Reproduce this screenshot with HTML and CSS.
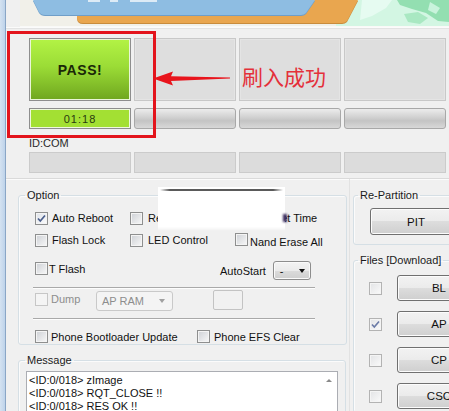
FILE: index.html
```html
<!DOCTYPE html>
<html lang="en">
<head>
<meta charset="utf-8">
<title>Odin3</title>
<link rel="stylesheet" href="styles.css">
</head>
<body>
<div class="window">
  <div class="frame"></div>
  <div class="main">
    <div class="banner">
      <svg width="443" height="27" viewBox="6 0 443 27" aria-hidden="true">
        <rect x="20" y="0" width="429" height="26" fill="#f1f0e9"/>
        <rect x="20" y="26" width="429" height="1" fill="#f9f9f7"/>
        <path d="M338 0 L449 0 L449 26 L336 26 Z" fill="#d3f6e3"/>
        <path d="M362 0 L392 0 L386 8 L372 16 L360 20 Z" fill="#e6fbf1"/>
        <path d="M397 0 L449 0 L449 22 L438 21 L426 13 L412 9 L400 5 Z" fill="#93dfb1"/>
        <path d="M404 14 L418 12 L428 18 L420 24 L408 22 Z" fill="#a9e8c2"/>
        <path d="M430 2 L440 8 L436 14 L428 10 Z" fill="#c9f3dc"/>
        <path d="M77 1 L358 1 L347 22 Q345 24 342 24 L83 24 Q77 24 77 18 Z" fill="#c98c3c"/>
        <path d="M77 0 L358 0 L347 21 Q345 23 342 23 L83 23 Q77 23 77 17 Z" fill="#e9a64f"/>
        <path d="M33 1 L315 1 L306 14 Q304 16 301 16 L45 16 Q41 16 39 13 Z" fill="#6f9ec8"/>
        <path d="M33 0 L315 0 L306 13 Q304 15 301 15 L45 15 Q41 15 39 12 Z" fill="#8ebde2"/>
        <rect x="88" y="0" width="12" height="2" fill="#ffffff" opacity="0.7"/>
        <rect x="110" y="0" width="8" height="2" fill="#ffffff" opacity="0.7"/>
        <rect x="130" y="0" width="27" height="2" fill="#ffffff" opacity="0.7"/>
      </svg>
    </div>
    <div class="banner-rule"></div>
    <div class="status">
      <div class="cells boxes">
        <div class="box pass">PASS!</div>
        <div class="box"></div>
        <div class="box"></div>
        <div class="box"></div>
      </div>
      <div class="cells bars">
        <div class="bar done">01:18</div>
        <div class="bar"></div>
        <div class="bar"></div>
        <div class="bar"></div>
      </div>
      <div class="idcom">ID:COM</div>
      <div class="cells ids">
        <div class="idbox"></div>
        <div class="idbox"></div>
        <div class="idbox"></div>
        <div class="idbox"></div>
      </div>
    </div>
    <div class="lower">
      <div class="left">
        <fieldset class="group option">
          <legend>Option</legend>
          <div class="row r1">
            <div class="chk w95"><span class="cb checked"><svg width="11" height="11" viewBox="0 0 11 11"><path d="M2 5.5 L4.3 8 L9 2.5" fill="none" stroke="#4b5f8c" stroke-width="1.7"/></svg></span><span class="t g4">Auto Reboot</span></div>
            <div class="chk w105"><span class="cb"></span><span class="t g5">Re-Partition</span></div>
            <div class="chk"><span class="cb"></span><span class="t g2">F. Reset Time</span></div>
          </div>
          <div class="row r2">
            <div class="chk w95"><span class="cb"></span><span class="t g4">Flash Lock</span></div>
            <div class="chk w105"><span class="cb"></span><span class="t g5">LED Control</span></div>
            <div class="chk nand"><span class="cb"></span><span class="t g2">Nand Erase All</span></div>
          </div>
          <div class="row r3">
            <div class="chk tflash"><span class="cb"></span><span class="t g1">T Flash</span></div>
            <div class="autostart">
              <span class="t">AutoStart</span>
              <div class="combo"><span>-</span><span class="caret"></span></div>
            </div>
          </div>
          <div class="rule"></div>
          <div class="row r4">
            <div class="chk dump disabled"><span class="cb"></span><span class="t g3">Dump</span></div>
            <div class="combo wide disabled"><span>AP RAM</span><span class="caret"></span></div>
            <div class="smallbox"></div>
          </div>
          <div class="rule rule2"></div>
          <div class="row r5">
            <div class="chk w162"><span class="cb"></span><span class="t g3">Phone Bootloader Update</span></div>
            <div class="chk"><span class="cb"></span><span class="t g4">Phone EFS Clear</span></div>
          </div>
        </fieldset>
        <fieldset class="group message">
          <legend>Message</legend>
          <div class="log">
            <div class="log-lines">
              <div>&lt;ID:0/018&gt; zImage</div>
              <div>&lt;ID:0/018&gt; RQT_CLOSE !!</div>
              <div>&lt;ID:0/018&gt; RES OK !!</div>
            </div>
            <div class="scroll"><span class="up"></span></div>
          </div>
        </fieldset>
      </div>
      <div class="right">
        <fieldset class="group repart">
          <legend>Re-Partition</legend>
          <div class="btn pit">PIT</div>
        </fieldset>
        <fieldset class="group files">
          <legend>Files [Download]</legend>
          <div class="file-row"><span class="cb light"></span><div class="btn file">BL</div></div>
          <div class="file-row"><span class="cb light checked"><svg width="11" height="11" viewBox="0 0 11 11"><path d="M2 5.5 L4.3 8 L9 2.5" fill="none" stroke="#6a7aa6" stroke-width="1.6"/></svg></span><div class="btn file">AP</div></div>
          <div class="file-row"><span class="cb light"></span><div class="btn file">CP</div></div>
          <div class="file-row"><span class="cb light"></span><div class="btn file">CSC</div></div>
        </fieldset>
      </div>
    </div>
  </div>
</div>

<div class="smudge"></div>
<div class="smudge-dot"></div>

<div class="red-box"></div>
<svg class="arrow" width="82" height="20" viewBox="0 0 82 20" aria-hidden="true">
  <path d="M2 10.5 L22 3.5 L20 8.3 L79 9.6 L79 10.6 L20 13 L22 17.5 Z" fill="#e8141c"/>
</svg>
<div class="note">刷入成功</div>
</body>
</html>
```

FILE: styles.css
```css
* { box-sizing: border-box; }
html, body { margin: 0; padding: 0; }
body {
  width: 449px;
  height: 411px;
  overflow: hidden;
  position: relative;
  background: #f0f0f0;
  font-family: "Liberation Sans", Arial, sans-serif;
  font-size: 11px;
  color: #111;
}

.window { display: flex; height: 411px; overflow: hidden; }
.frame {
  width: 6px;
  flex: none;
  background: linear-gradient(90deg, #d4e2f1, #bed3ea);
  border-right: 1px solid #8aa6c6;
}
.main { flex: 1; min-width: 0; display: flex; flex-direction: column; }

.banner { height: 27px; flex: none; }
.banner svg { display: block; }
.banner-rule { height: 2px; flex: none; border-top: 1px solid #fbfbfb; border-bottom: 1px solid #e3e3e3; }

/* status area */
.status { padding: 9px 0 0 23px; flex: none; }
.cells { display: grid; grid-template-columns: repeat(4, 102px); column-gap: 3px; }
.boxes { height: 63px; }
.box { background: #dedede; border: 1px solid #c8c8c8; box-shadow: inset 0 0 0 1px #e4e4e4; }
.box.pass {
  background: linear-gradient(#b3f345, #9bdc36 45%, #6fa61f);
  border: 1px solid #8e8e8e;
  box-shadow: inset 0 0 0 1px #eaf6d8;
  display: flex;
  align-items: center;
  justify-content: center;
  font-weight: bold;
  font-size: 14px;
  letter-spacing: 0.6px;
  color: #1a2808;
}
.bars { height: 21px; margin-top: 7px; }
.bar {
  border: 1px solid #a8a8a8;
  border-radius: 3px;
  background: linear-gradient(#ececec, #d3d3d3 40%, #c4c4c4 62%, #d8d8d8);
}
.bar.done {
  border-radius: 0;
  border-color: #8e8e8e;
  background: #a3e033;
  box-shadow: inset 0 0 0 1px #eef8de;
  display: flex;
  align-items: center;
  justify-content: center;
  color: #2a3a10;
  letter-spacing: 1px;
}
.idcom { margin-top: 7px; height: 15px; line-height: 15px; color: #2b2b2b; }
.ids { height: 21px; margin-top: 1px; }
.idbox { background: #dcdcdc; border: 1px solid #cbcbcb; }

/* lower area */
.lower {
  flex: 1;
  min-height: 0;
  overflow: hidden;
  display: flex;
  margin-top: 5px;
  border-top: 1px solid #dadada;
  box-shadow: inset 0 1px 0 #fbfbfb;
}
.left { width: 343px; flex: none; padding: 9px 0 0 12px; }
.right {
  flex: 1;
  min-width: 0;
  overflow: hidden;
  padding: 9px 0 0 3px;
  border-left: 1px solid #e2e2e2;
}

fieldset.group {
  margin: 0;
  padding: 0;
  border: 1px solid #d5dfe5;
  border-radius: 3px;
  box-shadow: inset 1px 1px 0 #fbfbfb;
  min-width: 0;
}
fieldset.group legend {
  margin-left: 6px;
  padding: 0 2px;
  height: 14px;
  line-height: 14px;
  color: #1a1a1a;
}

fieldset.option { width: 329px; padding-top: 5px; }
.row { display: flex; padding-left: 16px; }
.r1, .r2 { height: 22px; align-items: center; }
.r3 { height: 32px; align-items: flex-start; }
.r4 { height: 24px; align-items: center; }
.r5 { height: 24px; align-items: flex-start; padding-top: 10px; }

.chk { display: flex; align-items: center; white-space: nowrap; }
.w95 { width: 95px; }
.w105 { width: 105px; }
.w162 { width: 162px; }
.g1 { margin-left: 1px; }
.g2 { margin-left: 2px; }
.g3 { margin-left: 3px; }
.g4 { margin-left: 4px; }
.g5 { margin-left: 5px; }
.chk.nand { align-items: flex-start; }
.chk.nand .t { margin-top: 3px; }
.tflash { width: 185px; margin-top: 11px; }
.dump { width: 61px; margin-top: -4px; }

.cb {
  width: 13px;
  height: 13px;
  flex: none;
  display: flex;
  align-items: center;
  justify-content: center;
  border: 1px solid #8e8f8f;
  background: linear-gradient(135deg, #cdd0d5, #f8f8f8);
  box-shadow: inset 0 0 0 1px #f4f4f4;
}
.cb.checked { background: linear-gradient(135deg, #dfe3ea, #fbfbfb); }
.cb.light { border-color: #b3b3b3; background: linear-gradient(135deg, #e2e3e5, #fafafa); }
.disabled .cb { border-color: #c6c6c6; background: #f4f4f4; box-shadow: none; }
.disabled .t, .combo.disabled span:first-child { color: #8d8d8d; }

.autostart { display: flex; align-items: center; margin-top: 10px; }
.autostart .t { margin-right: 7px; }
.combo {
  height: 19px;
  width: 38px;
  display: flex;
  align-items: center;
  justify-content: space-between;
  padding: 0 5px 0 6px;
  border: 1px solid #8d8d8d;
  border-radius: 3px;
  background: linear-gradient(#f3f3f3, #ebebeb 50%, #dcdcdc 50%, #cfcfcf);
  box-shadow: inset 0 0 0 1px #fafafa;
}
.caret {
  width: 0;
  height: 0;
  border-left: 3.5px solid transparent;
  border-right: 3.5px solid transparent;
  border-top: 4px solid #111;
}
.combo.wide { width: 77px; height: 20px; padding: 0 7px 0 5px; }
.combo.disabled { border-color: #c9c9c9; background: #f4f4f4; box-shadow: none; }
.combo.disabled .caret { border-top-color: #a0a0a0; }
.smallbox {
  width: 30px;
  height: 20px;
  margin-left: 40px;
  margin-top: -2px;
  border: 1px solid #c3c3c3;
  border-radius: 2px;
  background: #f1f1f1;
}

.rule {
  margin: 4px 0 0 14px;
  width: 282px;
  height: 2px;
  border-top: 1px solid #a9a9a9;
  border-bottom: 1px solid #fdfdfd;
}
.rule.rule2 { margin-top: 5px; }

fieldset.message { width: 328px; margin-top: 8px; height: 70px; }
.log {
  margin: 4px 0 0 7px;
  width: 312px;
  height: 50px;
  display: flex;
  border: 1px solid #abadb3;
  background: #fff;
}
.log-lines { flex: 1; padding: 2px 0 0 2px; line-height: 13px; color: #111; white-space: nowrap; }
.scroll { width: 17px; display: flex; justify-content: center; padding-top: 7px; }
.up {
  width: 0;
  height: 0;
  border-left: 3px solid transparent;
  border-right: 3px solid transparent;
  border-bottom: 3px solid #8a8a8a;
}

/* right panel */
fieldset.repart { width: 120px; padding-bottom: 9px; }
.right fieldset.group legend { margin-left: 4px; }
.btn {
  display: flex;
  align-items: center;
  justify-content: center;
  border: 1px solid #707070;
  border-radius: 3px;
  background: linear-gradient(#f2f2f2, #ebebeb 50%, #dddddd 50%, #cfcfcf);
  box-shadow: inset 0 0 0 1px #fcfcfc;
  color: #111;
  font-size: 11.5px;
}
.pit { margin: 6px 0 0 16px; width: 92px; height: 27px; }
fieldset.files { width: 140px; margin-top: 8px; padding-top: 8px; height: 160px; }
.file-row { display: flex; align-items: center; padding-left: 15px; margin-bottom: 10px; }
.file { margin-left: 15px; width: 84px; height: 26px; }

/* overlays: annotation and blur covering the screenshot */
.smudge {
  position: absolute;
  left: 158px;
  top: 187px;
  width: 127px;
  height: 44px;
  background: #fff;
  -webkit-mask-image: linear-gradient(to bottom, #000 90%, transparent);
          mask-image: linear-gradient(to bottom, #000 90%, transparent);
}
.smudge::before {
  content: "";
  position: absolute;
  left: 2px;
  right: 2px;
  top: 2px;
  height: 2px;
  background: linear-gradient(90deg, transparent, #5a5a5a 8%, #5a5a5a 92%, transparent);
}
.smudge-dot {
  position: absolute;
  left: 283px;
  top: 214px;
  width: 4px;
  height: 8px;
  background: #3b2c5e;
  filter: blur(1px);
}
.red-box {
  position: absolute;
  left: 7px;
  top: 31px;
  width: 149px;
  height: 107px;
  border: 3px solid #e3141c;
}
.arrow { position: absolute; left: 151px; top: 68px; }
.note {
  position: absolute;
  left: 242px;
  top: 64px;
  font-family: "Noto Sans CJK SC", sans-serif;
  font-size: 21px;
  line-height: 24px;
  color: #e4303a;
}
```
